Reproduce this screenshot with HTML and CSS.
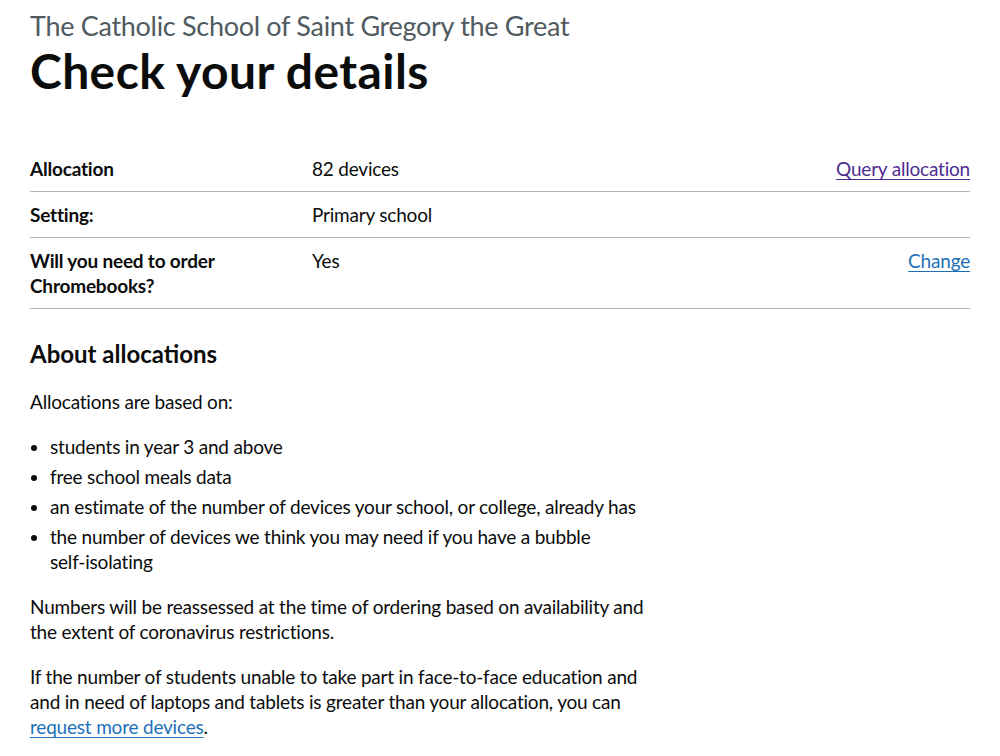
FILE: index.html
```html
<!DOCTYPE html>
<html lang="en">
<head>
<meta charset="utf-8">
<title>Check your details</title>
<link rel="stylesheet" href="styles.css">
</head>
<body>
<div class="container">
  <main class="main">
    <span class="caption">The Catholic School of Saint Gregory the Great</span>
    <h1 class="heading-xl">Check your details</h1>

    <dl class="summary-list">
      <div class="row">
        <dt class="key">Allocation</dt>
        <dd class="value">82 devices</dd>
        <dd class="actions"><a class="link visited" href="#">Query allocation</a></dd>
      </div>
      <div class="row">
        <dt class="key">Setting:</dt>
        <dd class="value">Primary school</dd>
        <dd class="actions"></dd>
      </div>
      <div class="row">
        <dt class="key">Will you need to order Chromebooks?</dt>
        <dd class="value">Yes</dd>
        <dd class="actions"><a class="link" href="#">Change</a></dd>
      </div>
    </dl>

    <div class="two-thirds">
      <h2 class="heading-m">About allocations</h2>
      <p class="body">Allocations are based on:</p>
      <ul class="bullets">
        <li>students in year 3 and above</li>
        <li>free school meals data</li>
        <li>an estimate of the number of devices your school, or college, already has</li>
        <li>the number of devices we think you may need if you have a bubble <span class="nowrap">self-isolating</span></li>
      </ul>
      <p class="body">Numbers will be reassessed at the time of ordering based on availability and the extent of coronavirus restrictions.</p>
      <p class="body">If the number of students unable to take part in face-to-face education and and in need of laptops and tablets is greater than your allocation, you can <a class="link" href="#">request more devices</a>.</p>
    </div>
  </main>
</div>
</body>
</html>
```
FILE: styles.css
```css
html, body {
  margin: 0;
  padding: 0;
  background: #ffffff;
}
body {
  font-family: Lato, "Liberation Sans", sans-serif;
  color: #0b0c0c;
  font-size: 19px;
  line-height: 25px;
  letter-spacing: -0.2px;
}
.container {
  margin: 0 30px;
}
.main {
  padding-top: 11px;
}
.caption {
  display: block;
  font-size: 27px;
  line-height: 30px;
  color: #505a5f;
  margin-bottom: 5px;
  letter-spacing: -0.3px;
}
.heading-xl {
  font-size: 48px;
  line-height: 50px;
  font-weight: 700;
  margin: 0 0 50px;
  letter-spacing: 0.4px;
}
.summary-list {
  margin: 0 0 30px;
}
.row {
  display: grid;
  grid-template-columns: 30% 50% 20%;
  border-bottom: 1px solid #b1b4b6;
}
.key, .value, .actions {
  margin: 0;
  padding: 10px 20px 10px 0;
}
.key {
  font-weight: 700;
}
.actions {
  padding-right: 0;
  text-align: right;
}
.link {
  color: #1d70b8;
  text-decoration: underline;
  text-decoration-thickness: 1px;
  text-underline-offset: 3px;
}
.link.visited {
  color: #4c2c92;
}
.nowrap {
  white-space: nowrap;
}
.two-thirds {
  width: 617px;
}
.heading-m {
  font-size: 24px;
  line-height: 30px;
  font-weight: 700;
  margin: 0 0 20px;
  letter-spacing: 0;
}
.body {
  margin: 0 0 20px;
}
.bullets {
  margin: 0 0 20px;
  padding-left: 20px;
  list-style-type: disc;
}
.bullets li {
  margin-bottom: 5px;
}
```
